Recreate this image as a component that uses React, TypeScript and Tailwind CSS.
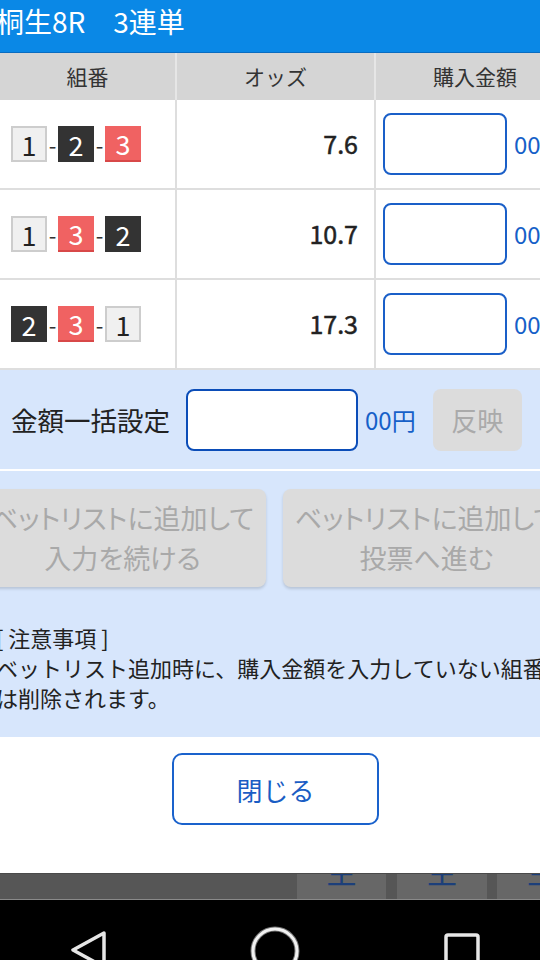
import React from "react";

type Boat = 1 | 2 | 3;

const boatStyle: Record<Boat, string> = {
  1: "bg-[#f0f0f0] border-2 border-[#cdcdcd] text-[#222]",
  2: "bg-[#333333] text-white",
  3: "bg-[#f06262] text-white border-b-2 border-[#d84848]",
};

const rows: { combo: Boat[]; odds: string }[] = [
  { combo: [1, 2, 3], odds: "7.6" },
  { combo: [1, 3, 2], odds: "10.7" },
  { combo: [2, 3, 1], odds: "17.3" },
];

const BoatBox: React.FC<{ n: Boat }> = ({ n }) => (
  <span
    className={`w-[36px] h-[36px] flex items-center justify-center text-[27px] leading-none ${boatStyle[n]}`}
  >
    {n}
  </span>
);

const Dash = () => (
  <span className="w-[11px] text-center text-[22px] leading-none text-[#333]">-</span>
);

const App: React.FC = () => {
  return (
    <div className="w-[540px] h-[960px] overflow-hidden bg-white flex flex-col font-['Noto_Sans_CJK_JP','Noto_Sans',sans-serif]">
      {/* Title bar */}
      <div className="h-[53px] shrink-0 bg-[#0a88e6] border-b border-[#0a6cc0] flex items-center">
        <span className="ml-[-4px] pb-[10px] text-[28px] leading-none text-white whitespace-nowrap">
          桐生8R　3連単
        </span>
      </div>

      {/* Odds table */}
      <div className="w-[620px] shrink-0">
        <div className="flex h-[47px] bg-[#d5d5d5] text-[21px] text-[#333]">
          <div className="w-[177px] border-r-2 border-[#e6e6e6] flex items-center justify-center">
            組番
          </div>
          <div className="w-[199px] border-r-2 border-[#e6e6e6] flex items-center justify-center">
            オッズ
          </div>
          <div className="w-[198px] flex items-center justify-center">
            購入金額
          </div>
        </div>
        {rows.map((r, i) => (
          <div key={i} className="flex h-[90px] border-b-2 border-[#dedede]">
            <div className="w-[177px] border-r-2 border-[#dedede] flex items-center pl-[11px]">
              <BoatBox n={r.combo[0]} />
              <Dash />
              <BoatBox n={r.combo[1]} />
              <Dash />
              <BoatBox n={r.combo[2]} />
            </div>
            <div className="w-[199px] border-r-2 border-[#dedede] flex items-center justify-end pr-[16px] text-[25px] text-[#222] [-webkit-text-stroke:0.5px_#222]">
              {r.odds}
            </div>
            <div className="flex-1 flex items-center pl-[7px]">
              <div className="w-[124px] h-[62px] rounded-[8px] border-2 border-[#1a5fc8] bg-white" />
              <span className="ml-[7px] text-[24px] text-[#1560c8]">00</span>
            </div>
          </div>
        ))}
      </div>

      {/* Bulk amount + actions */}
      <div className="bg-[#d7e6fc] shrink-0">
        <div className="h-[99px] flex items-center pl-[11px]">
          <span className="text-[26.5px] text-[#222]">金額一括設定</span>
          <div className="ml-[16px] w-[172px] h-[62px] rounded-[8px] border-2 border-[#0b4db8] bg-white" />
          <span className="ml-[7px] text-[24px] text-[#1560c8]">00円</span>
          <div className="ml-[17px] w-[89px] h-[62px] rounded-[8px] bg-[#dcdcdc] text-[#aaaaaa] text-[26px] flex items-center justify-center">
            反映
          </div>
        </div>
        <div className="h-[2px] bg-white" />
        <div className="w-[620px] ml-[-21px] pt-[18px] flex gap-[17px] text-[27px] leading-[40px] text-[#a9a9a9] [font-feature-settings:'palt']">
          <div className="w-[287px] h-[98px] rounded-[8px] bg-[#dcdcdc] shadow-[0_2px_3px_rgba(0,0,0,0.15)] flex flex-col items-center justify-center whitespace-nowrap">
            <span>ベットリストに追加して</span>
            <span>入力を続ける</span>
          </div>
          <div className="w-[287px] h-[98px] rounded-[8px] bg-[#dcdcdc] shadow-[0_2px_3px_rgba(0,0,0,0.15)] flex flex-col items-center justify-center whitespace-nowrap">
            <span>ベットリストに追加して</span>
            <span>投票へ進む</span>
          </div>
        </div>
        <div className="mt-[35px] pb-[25px] ml-[-4px] text-[22px] leading-[30px] text-[#222] whitespace-nowrap">
          <p>[ 注意事項 ]</p>
          <p>ベットリスト追加時に、購入金額を入力していない組番</p>
          <p>は削除されます。</p>
        </div>
      </div>

      {/* Close */}
      <div className="flex-1 pt-[16px] pl-[172px]">
        <button className="w-[207px] h-[72px] rounded-[10px] border-2 border-[#1a62cc] bg-white text-[26px] text-[#1a5dc4]">
          閉じる
        </button>
      </div>

      {/* Page underneath: tab bar */}
      <div className="h-[27px] shrink-0 bg-[#565656] border-t border-[#4a4a4a] border-b border-b-[#8a8a8a] flex">
        <div className="w-[297px]" />
        <div className="w-[89px] bg-[#676767] overflow-hidden flex justify-center">
          <span className="mt-[-19px] text-[30px] leading-none text-[#1c3f7a]">主</span>
        </div>
        <div className="w-[11px]" />
        <div className="w-[90px] bg-[#676767] overflow-hidden flex justify-center">
          <span className="mt-[-19px] text-[30px] leading-none text-[#1c3f7a]">主</span>
        </div>
        <div className="w-[10px]" />
        <div className="flex-1 bg-[#676767] overflow-hidden flex">
          <span className="ml-[30px] mt-[-19px] text-[30px] leading-none text-[#1c3f7a]">主</span>
        </div>
      </div>

      {/* Android nav bar */}
      <div className="h-[60px] shrink-0 bg-black">
        <svg width="540" height="60" viewBox="0 0 540 60">
          <path
            d="M104 33 L73 50 L104 67 Z"
            fill="none"
            stroke="#e6e6e6"
            strokeWidth="3.5"
            strokeLinejoin="round"
          />
          <circle cx="275" cy="51" r="22" fill="none" stroke="#777" strokeWidth="5" />
          <circle cx="275" cy="51" r="22" fill="none" stroke="#f2f2f2" strokeWidth="3" />
          <rect
            x="446"
            y="35"
            width="32"
            height="34"
            rx="2"
            fill="none"
            stroke="#e6e6e6"
            strokeWidth="3.5"
          />
        </svg>
      </div>
    </div>
  );
};

export default App;
